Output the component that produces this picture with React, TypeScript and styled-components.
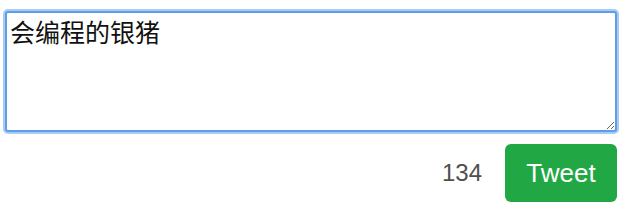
import styled, { createGlobalStyle } from 'styled-components';

const GlobalStyle = createGlobalStyle`
  body {
    margin: 0;
    background: #ffffff;
    font-family: "Liberation Sans", "Noto Sans CJK SC", sans-serif;
  }
`;

const Composer = styled.div`
  width: 614px;
  padding: 11px 0 0 5px;
`;

const TweetInput = styled.textarea`
  display: block;
  box-sizing: border-box;
  width: 612px;
  height: 121px;
  margin: 0;
  padding: 3px 3px;
  border: 2px solid #5e9ee8;
  border-radius: 3px;
  box-shadow: 0 0 0 2px #a9ccf3;
  outline: none;
  resize: both;
  font-family: "Liberation Sans", "Noto Sans CJK SC", sans-serif;
  font-size: 25px;
  line-height: 34px;
  color: #111;
`;

const Footer = styled.div`
  display: flex;
  justify-content: flex-end;
  align-items: center;
  gap: 23px;
  margin-top: 12px;
  padding-right: 2px;
`;

const Counter = styled.span`
  font-size: 24px;
  color: #4f4f4f;
`;

const TweetButton = styled.button`
  width: 112px;
  height: 58px;
  border: none;
  border-radius: 6px;
  background-color: #22a745;
  color: #ffffff;
  font-family: "Liberation Sans", sans-serif;
  font-size: 26px;
  cursor: pointer;
`;

const App = () => {
  return (
    <>
      <GlobalStyle />
      <Composer>
        <TweetInput defaultValue="会编程的银猪" />
        <Footer>
          <Counter>134</Counter>
          <TweetButton>Tweet</TweetButton>
        </Footer>
      </Composer>
    </>
  );
};

export default App;
